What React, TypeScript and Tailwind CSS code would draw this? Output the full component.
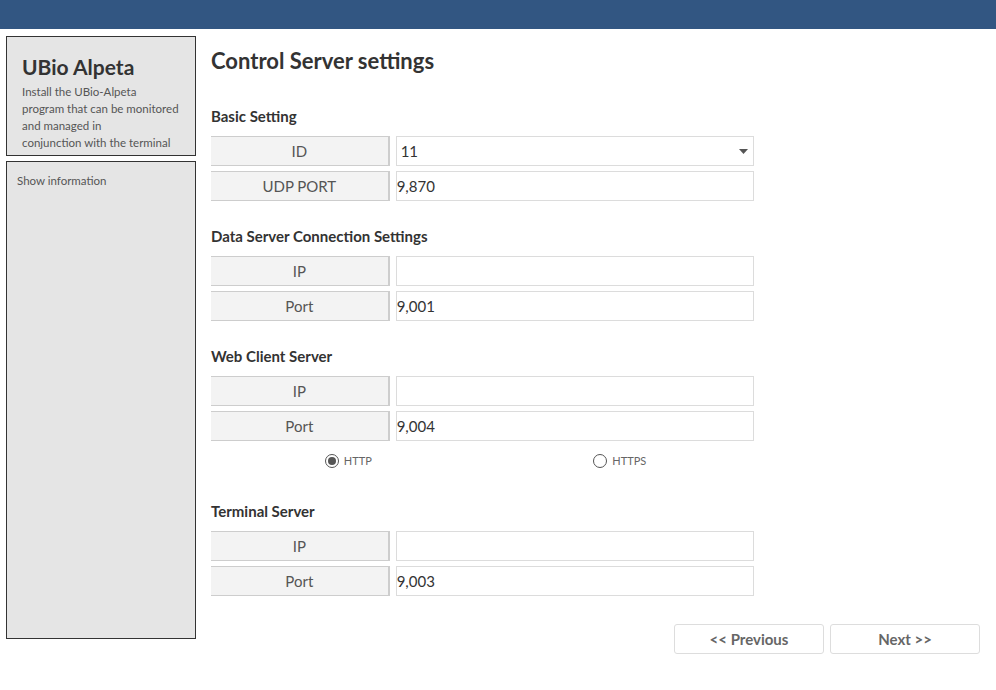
import React from "react";

const font = { fontFamily: '"Source Sans Pro", Lato, "Noto Sans", sans-serif' };

function Row({ label, value, select }: { label: string; value: string; select?: boolean }) {
  return (
    <div className="flex h-[30px] gap-[6px]">
      <div className="w-[179px] h-full flex items-center justify-center bg-[#f3f3f3] border-t border-b border-r-2 border-[#cdcdcd] text-[15px] text-[#555]">
        {label}
      </div>
      <div
        className={
          select
            ? "w-[359px] h-full flex items-center justify-between border border-[#dcdcdc] bg-white pl-[4px] pr-[5px] text-[15px] text-[#333]"
            : "w-[359px] h-full flex items-center justify-between border border-[#dcdcdc] bg-white pl-[0px] pr-[5px] text-[15px] text-[#333]"
        }
      >
        <span>{value}</span>
        {select && (
          <svg width="9" height="5" viewBox="0 0 9 5">
            <path d="M0 0 L9 0 L4.5 5 Z" fill="#555" />
          </svg>
        )}
      </div>
    </div>
  );
}

function Section({ title, children, mt }: { title: string; children: React.ReactNode; mt: string }) {
  return (
    <div className={mt}>
      <div className="h-[20px] leading-[20px] text-[15px] font-bold text-[#333]">{title}</div>
      <div className="mt-[10px] flex flex-col gap-[5px] w-[543px]">{children}</div>
    </div>
  );
}

function Radio({ checked, label }: { checked?: boolean; label: string }) {
  return (
    <div className="flex items-center justify-center gap-[5px] pl-[3px]">
      <div className="w-[14px] h-[14px] rounded-full border border-[#555] flex items-center justify-center">
        {checked && <div className="w-[8px] h-[8px] rounded-full bg-[#555]" />}
      </div>
      <span className="text-[11px] text-[#666]">{label}</span>
    </div>
  );
}

export default function App() {
  return (
    <div className="w-[996px] h-[690px] bg-white overflow-hidden" style={font}>
      <div className="h-[29px] bg-[#325682]" />
      <div className="flex">
        <div className="ml-[6px] mt-[7px] w-[190px] flex flex-col gap-[5px]">
          <div className="h-[120px] bg-[#e5e5e5] border border-[#333] pl-[15px] pt-[17px]">
            <div className="text-[21px] font-bold text-[#333] leading-[26px]">UBio Alpeta</div>
            <div className="text-[11.5px] leading-[17px] text-[#555] mt-[3px]">
              Install the UBio-Alpeta
              <br />
              program that can be monitored
              <br />
              and managed in
              <br />
              conjunction with the terminal
            </div>
          </div>
          <div className="h-[478px] bg-[#e5e5e5] border border-[#333] pl-[10px] pt-[10px]">
            <div className="text-[11.5px] leading-[17px] text-[#555]">Show information</div>
          </div>
        </div>
        <div className="ml-[15px] flex-1 pr-[16px]">
          <div className="mt-[17px] h-[30px] leading-[30px] text-[22px] font-bold text-[#333]">
            Control Server settings
          </div>
          <Section title="Basic Setting" mt="mt-[30px]">
            <Row label="ID" value="11" select />
            <Row label="UDP PORT" value="9,870" />
          </Section>
          <Section title="Data Server Connection Settings" mt="mt-[25px]">
            <Row label="IP" value="" />
            <Row label="Port" value="9,001" />
          </Section>
          <Section title="Web Client Server" mt="mt-[25px]">
            <Row label="IP" value="" />
            <Row label="Port" value="9,004" />
          </Section>
          <div className="mt-[10px] h-[20px] w-[543px] grid grid-cols-2">
            <Radio checked label="HTTP" />
            <Radio label="HTTPS" />
          </div>
          <Section title="Terminal Server" mt="mt-[30px]">
            <Row label="IP" value="" />
            <Row label="Port" value="9,003" />
          </Section>
          <div className="mt-[28px] flex justify-end gap-[6px]">
            <button className="w-[150px] h-[30px] border border-[#ddd] rounded-[3px] bg-white text-[15px] font-bold text-[#666]">
              &lt;&lt; Previous
            </button>
            <button className="w-[150px] h-[30px] border border-[#ddd] rounded-[3px] bg-white text-[15px] font-bold text-[#666]">
              Next &gt;&gt;
            </button>
          </div>
        </div>
      </div>
    </div>
  );
}
